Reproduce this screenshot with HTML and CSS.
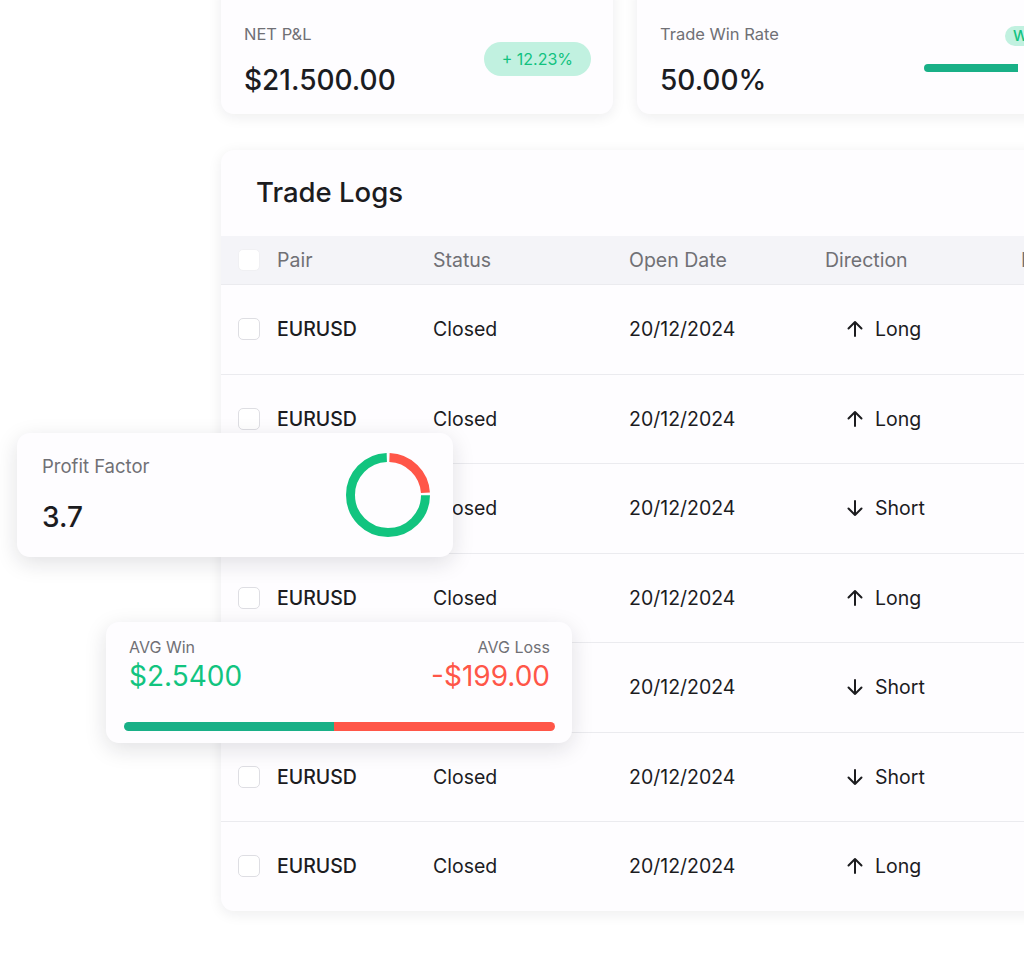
FILE: index.html
```html
<!DOCTYPE html>
<html>
<head>
    <meta charset="UTF-8">
    <title>Trade Journal</title>
    <meta name="viewport" content="width=device-width, initial-scale=1.0">
    <link rel="stylesheet" href="styles.css">
</head>
<body>
    <div class="scene">
        <div class="board">
            <div class="stats">
                <div class="card stat pnl">
                    <div>
                        <div class="stat-label">NET P&amp;L</div>
                        <div class="stat-value">$21.500.00</div>
                    </div>
                    <span class="badge">+ 12.23%</span>
                </div>
                <div class="card stat winrate">
                    <div>
                        <div class="stat-label">Trade Win Rate</div>
                        <div class="stat-value">50.00%</div>
                    </div>
                    <div class="win-split">
                        <div class="win-tags">
                            <span class="tag">Won</span>
                        </div>
                        <div class="win-bar">
                            <span class="win-part" style="width: 50%"></span>
                            <span class="loss-part"></span>
                        </div>
                    </div>
                </div>
            </div>

            <div class="card logs">
                <h2 class="logs-title">Trade Logs</h2>
                <div class="row head">
                    <span class="check"></span>
                    <span>Pair</span>
                    <span>Status</span>
                    <span>Open Date</span>
                    <span>Direction</span>
                    <span>P&amp;L</span>
                </div>
                <div class="row">
                    <span class="check"></span>
                    <span class="pair">EURUSD</span>
                    <span>Closed</span>
                    <span>20/12/2024</span>
                    <span class="dir"><svg viewBox="0 0 18 18"><path d="M9 16V2M2.5 8.5 9 2l6.5 6.5"/></svg>Long</span>
                </div>
                <div class="row">
                    <span class="check"></span>
                    <span class="pair">EURUSD</span>
                    <span>Closed</span>
                    <span>20/12/2024</span>
                    <span class="dir"><svg viewBox="0 0 18 18"><path d="M9 16V2M2.5 8.5 9 2l6.5 6.5"/></svg>Long</span>
                </div>
                <div class="row">
                    <span class="check"></span>
                    <span class="pair">EURUSD</span>
                    <span>Closed</span>
                    <span>20/12/2024</span>
                    <span class="dir"><svg viewBox="0 0 18 18"><path d="M9 2v14M2.5 9.5 9 16l6.5-6.5"/></svg>Short</span>
                </div>
                <div class="row">
                    <span class="check"></span>
                    <span class="pair">EURUSD</span>
                    <span>Closed</span>
                    <span>20/12/2024</span>
                    <span class="dir"><svg viewBox="0 0 18 18"><path d="M9 16V2M2.5 8.5 9 2l6.5 6.5"/></svg>Long</span>
                </div>
                <div class="row">
                    <span class="check"></span>
                    <span class="pair">EURUSD</span>
                    <span>Closed</span>
                    <span>20/12/2024</span>
                    <span class="dir"><svg viewBox="0 0 18 18"><path d="M9 2v14M2.5 9.5 9 16l6.5-6.5"/></svg>Short</span>
                </div>
                <div class="row">
                    <span class="check"></span>
                    <span class="pair">EURUSD</span>
                    <span>Closed</span>
                    <span>20/12/2024</span>
                    <span class="dir"><svg viewBox="0 0 18 18"><path d="M9 2v14M2.5 9.5 9 16l6.5-6.5"/></svg>Short</span>
                </div>
                <div class="row">
                    <span class="check"></span>
                    <span class="pair">EURUSD</span>
                    <span>Closed</span>
                    <span>20/12/2024</span>
                    <span class="dir"><svg viewBox="0 0 18 18"><path d="M9 16V2M2.5 8.5 9 2l6.5 6.5"/></svg>Long</span>
                </div>
            </div>
        </div>

        <!-- cards floating over the table -->
        <div class="card float profit">
            <div>
                <div class="profit-label">Profit Factor</div>
                <div class="stat-value">3.7</div>
            </div>
            <svg class="donut" viewBox="0 0 84 84">
                <circle class="donut-loss" cx="42" cy="42" r="37.5" stroke-dasharray="55 181" stroke-dashoffset="-1.5" transform="rotate(-90 42 42)"/>
                <circle class="donut-win" cx="42" cy="42" r="37.5" stroke-dasharray="175 61" stroke-dashoffset="-59" transform="rotate(-90 42 42)"/>
            </svg>
        </div>

        <div class="card float avg">
            <div class="avg-top">
                <div>
                    <div class="avg-label">AVG Win</div>
                    <div class="avg-value win">$2.5400</div>
                </div>
                <div class="avg-right">
                    <div class="avg-label">AVG Loss</div>
                    <div class="avg-value loss">-$199.00</div>
                </div>
            </div>
            <div class="avg-bar">
                <span class="avg-win" style="width: 48.7%"></span>
                <span class="avg-loss"></span>
            </div>
        </div>
    </div>
</body>
</html>
```

FILE: styles.css
```css
body {
    margin: 0;
    background-color: #fff;
    color: #1c1c1f;
    font-family: Inter, "Noto Sans", sans-serif;
    overflow: hidden;
}
.scene {
    position: relative;
    display: flow-root;
    width: 1024px;
    height: 959px;
    overflow: hidden;
}
.board {
    padding-left: 221px;
    width: 900px;
}
.card {
    background-color: #fefdff;
    border-radius: 13px;
    box-shadow: 0 3px 14px rgba(20, 20, 40, 0.08);
}

/* top stats */
.stats {
    display: flex;
    gap: 24px;
    margin-top: -20px;
}
.stat {
    display: flex;
    justify-content: space-between;
    padding: 44px 22px 17px 23px;
    box-sizing: border-box;
    height: 134px;
}
.pnl {
    width: 392px;
    flex: none;
}
.winrate {
    width: 500px;
    flex: none;
}
.stat-label {
    font-size: 16.5px;
    line-height: 20px;
    color: #707075;
}
.stat-value {
    margin-top: 19px;
    font-size: 28px;
    line-height: 34px;
    font-weight: 500;
    color: #1c1c1f;
}
.badge {
    align-self: center;
    margin-top: -3px;
    padding: 0 18px;
    height: 34px;
    line-height: 34px;
    border-radius: 17px;
    background-color: #c1f1e0;
    color: #11c27f;
    font-size: 16px;
}
.win-split {
    width: 188px;
    margin-right: 3px;
}
.win-tags {
    display: flex;
    padding-left: 81px;
    margin-top: 2px;
}
.tag {
    height: 20px;
    line-height: 20px;
    padding: 0 8px;
    border-radius: 10px;
    font-size: 15px;
    font-weight: 500;
    background-color: #c1f1e0;
    color: #11c27f;
    white-space: nowrap;
}
.win-bar {
    display: flex;
    gap: 10px;
    margin-top: 18px;
    height: 8px;
}
.win-part {
    background-color: #19b087;
    border-radius: 4px 0 0 4px;
}
.loss-part {
    flex: 1;
    background-color: #ff5648;
    border-radius: 0 4px 4px 0;
}

/* trade logs */
.logs {
    margin-top: 36px;
    width: 880px;
    overflow: hidden;
}
.logs-title {
    margin: 0;
    padding: 26px 35px 28px;
    font-size: 27.5px;
    line-height: 32px;
    font-weight: 500;
    color: #1c1c1f;
}
.row {
    display: grid;
    grid-template-columns: 39px 156px 196px 196px 196px 1fr;
    align-items: center;
    padding-left: 17px;
    height: 88.5px;
    border-bottom: 1px solid #ebebef;
    font-size: 19.5px;
    color: #1c1c1f;
    white-space: nowrap;
}
.row:last-child {
    border-bottom: none;
}
.head {
    height: 48px;
    background-color: #f4f4f8;
    color: #707075;
}
.check {
    width: 20px;
    height: 20px;
    border: 1px solid #dedee3;
    border-radius: 5px;
    background-color: #fff;
}
.head .check {
    border-color: #f0f0f3;
}
.pair {
    font-weight: 500;
}
.dir {
    display: flex;
    align-items: center;
    gap: 11px;
    padding-left: 21px;
}
.dir svg {
    width: 18px;
    height: 18px;
    fill: none;
    stroke: #1c1c1f;
    stroke-width: 2;
    stroke-linecap: round;
    stroke-linejoin: round;
}

/* floating cards */
.float {
    position: absolute;
    box-shadow: 0 6px 22px rgba(20, 20, 40, 0.13);
    box-sizing: border-box;
}
.profit {
    left: 17px;
    top: 433px;
    width: 436px;
    height: 124px;
    padding: 22px 23px 23px 25px;
    display: flex;
    justify-content: space-between;
    align-items: center;
}
.profit-label {
    font-size: 18.5px;
    line-height: 22px;
    color: #707075;
}
.profit .stat-value {
    margin-top: 23px;
}
.donut {
    width: 84px;
    height: 84px;
}
.donut circle {
    fill: none;
    stroke-width: 9;
}
.donut-loss {
    stroke: #ff5648;
}
.donut-win {
    stroke: #12c47f;
}
.avg {
    left: 106px;
    top: 622px;
    width: 466px;
    height: 121px;
    padding: 15px 17px 12px 18px;
}
.avg-top {
    display: flex;
    justify-content: space-between;
    padding: 0 5px;
}
.avg-right {
    text-align: right;
}
.avg-label {
    font-size: 16px;
    line-height: 20px;
    color: #707075;
}
.avg-value {
    margin-top: 2px;
    font-size: 28px;
    line-height: 34px;
}
.avg-value.win {
    color: #12c47f;
}
.avg-value.loss {
    color: #ff5648;
}
.avg-bar {
    display: flex;
    margin-top: 29px;
    height: 9px;
    border-radius: 5px;
    overflow: hidden;
}
.avg-win {
    background-color: #19b087;
}
.avg-loss {
    flex: 1;
    background-color: #ff5648;
}
```
